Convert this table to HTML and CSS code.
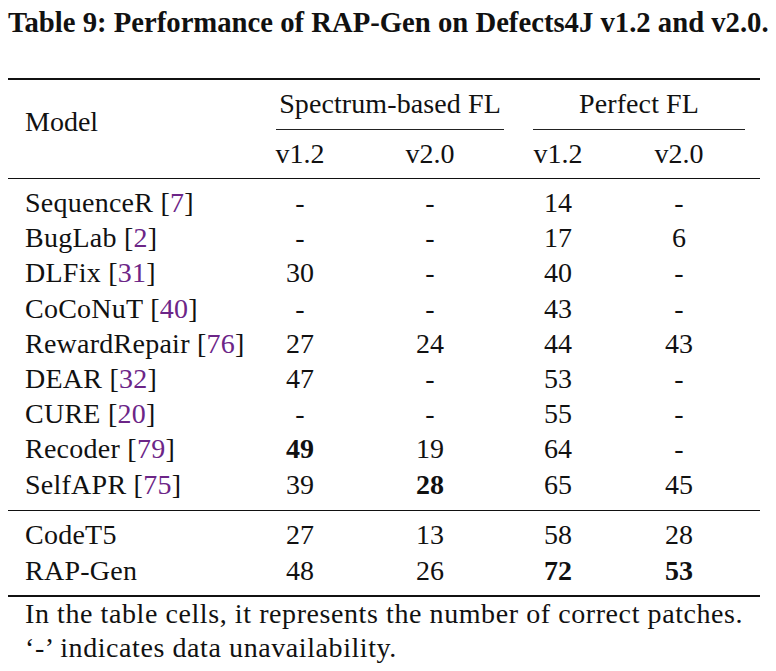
FILE: index.html
```html
<!DOCTYPE html>
<html lang="en">
<head>
<meta charset="utf-8">
<title>Table 9: Performance of RAP-Gen on Defects4J</title>
<link rel="stylesheet" href="styles.css">
</head>
<body>
<figure class="table-figure">
  <figcaption class="caption">Table 9: Performance of RAP-Gen on Defects4J v1.2 and v2.0.</figcaption>
  <table class="results">
    <colgroup>
      <col class="col-model">
      <col class="col-a">
      <col class="col-b">
      <col class="col-c">
      <col class="col-d">
    </colgroup>
    <thead>
      <tr class="head-top">
        <th rowspan="2" class="model-head">Model</th>
        <th colspan="2" class="group"><div class="group-label group-sbfl">Spectrum-based FL</div></th>
        <th colspan="2" class="group"><div class="group-label group-pfl">Perfect FL</div></th>
      </tr>
      <tr class="head-sub">
        <th>v1.2</th>
        <th>v2.0</th>
        <th>v1.2</th>
        <th>v2.0</th>
      </tr>
    </thead>
    <tbody class="baselines">
      <tr><td class="model">SequenceR <span class="cite">[<a>7</a>]</span></td><td>-</td><td>-</td><td>14</td><td>-</td></tr>
      <tr><td class="model">BugLab <span class="cite">[<a>2</a>]</span></td><td>-</td><td>-</td><td>17</td><td>6</td></tr>
      <tr><td class="model">DLFix <span class="cite">[<a>31</a>]</span></td><td>30</td><td>-</td><td>40</td><td>-</td></tr>
      <tr><td class="model">CoCoNuT <span class="cite">[<a>40</a>]</span></td><td>-</td><td>-</td><td>43</td><td>-</td></tr>
      <tr><td class="model">RewardRepair <span class="cite">[<a>76</a>]</span></td><td>27</td><td>24</td><td>44</td><td>43</td></tr>
      <tr><td class="model">DEAR <span class="cite">[<a>32</a>]</span></td><td>47</td><td>-</td><td>53</td><td>-</td></tr>
      <tr><td class="model">CURE <span class="cite">[<a>20</a>]</span></td><td>-</td><td>-</td><td>55</td><td>-</td></tr>
      <tr><td class="model">Recoder <span class="cite">[<a>79</a>]</span></td><td><b>49</b></td><td>19</td><td>64</td><td>-</td></tr>
      <tr><td class="model">SelfAPR <span class="cite">[<a>75</a>]</span></td><td>39</td><td><b>28</b></td><td>65</td><td>45</td></tr>
    </tbody>
    <tbody class="ours">
      <tr><td class="model">CodeT5</td><td>27</td><td>13</td><td>58</td><td>28</td></tr>
      <tr><td class="model">RAP-Gen</td><td>48</td><td>26</td><td><b>72</b></td><td><b>53</b></td></tr>
    </tbody>
  </table>
  <p class="note">In the table cells, it represents the number of correct patches.<br>‘-’ indicates data unavailability.</p>
</figure>
</body>
</html>
```

FILE: styles.css
```css
html, body {
  margin: 0;
  padding: 0;
  background: #ffffff;
}

body {
  font-family: "Liberation Serif", "Times New Roman", serif;
  color: #111111;
}

.table-figure {
  margin: 0;
  padding: 6px 8px 0 8px;
  width: 752px;
}

.caption {
  font-weight: bold;
  font-size: 28.7px;
  line-height: 32px;
  white-space: nowrap;
  margin: 0 0 40px 0;
}

.results {
  width: 752px;
  table-layout: fixed;
  border-collapse: separate;
  border-spacing: 0;
  font-size: 28px;
  line-height: 35.2px;
}

.col-model { width: 250px; }
.col-a { width: 84px; }
.col-b { width: 176px; }
.col-c { width: 80px; }
.col-d { width: 162px; }

.results th,
.results td {
  padding: 0;
  font-weight: normal;
  text-align: center;
  vertical-align: top;
  white-space: nowrap;
}

.results b {
  font-weight: bold;
}

/* header */
.head-top th {
  border-top: 2px solid #111111;
  padding-top: 6px;
}

.model-head {
  text-align: left !important;
  padding-left: 17px !important;
  padding-top: 24px !important;
  border-bottom: 1px solid #111111;
}

.group-label {
  padding-bottom: 8px;
  border-bottom: 1px solid #222222;
  letter-spacing: 0.1px;
}

.group-sbfl {
  margin: 0 14px 0 18px;
}

.group-pfl {
  margin: 0 15px 0 15px;
}

.head-sub th {
  padding-top: 6px;
  padding-bottom: 6.6px;
  border-bottom: 1px solid #111111;
}

/* body */
.results td.model {
  text-align: left;
  padding-left: 17px;
  letter-spacing: 0.25px;
}

.baselines tr:first-child td {
  padding-top: 6px;
}

.baselines tr:last-child td {
  padding-bottom: 8px;
  border-bottom: 1px solid #111111;
}

.ours tr:first-child td {
  padding-top: 6.5px;
}

.ours tr:last-child td {
  padding-bottom: 7.5px;
  border-bottom: 2px solid #111111;
}

.cite a {
  color: #6c2587;
  text-decoration: none;
}

.note {
  margin: 0;
  padding-left: 17px;
  font-size: 28px;
  line-height: 33.4px;
  letter-spacing: 0.58px;
  white-space: nowrap;
}
```
